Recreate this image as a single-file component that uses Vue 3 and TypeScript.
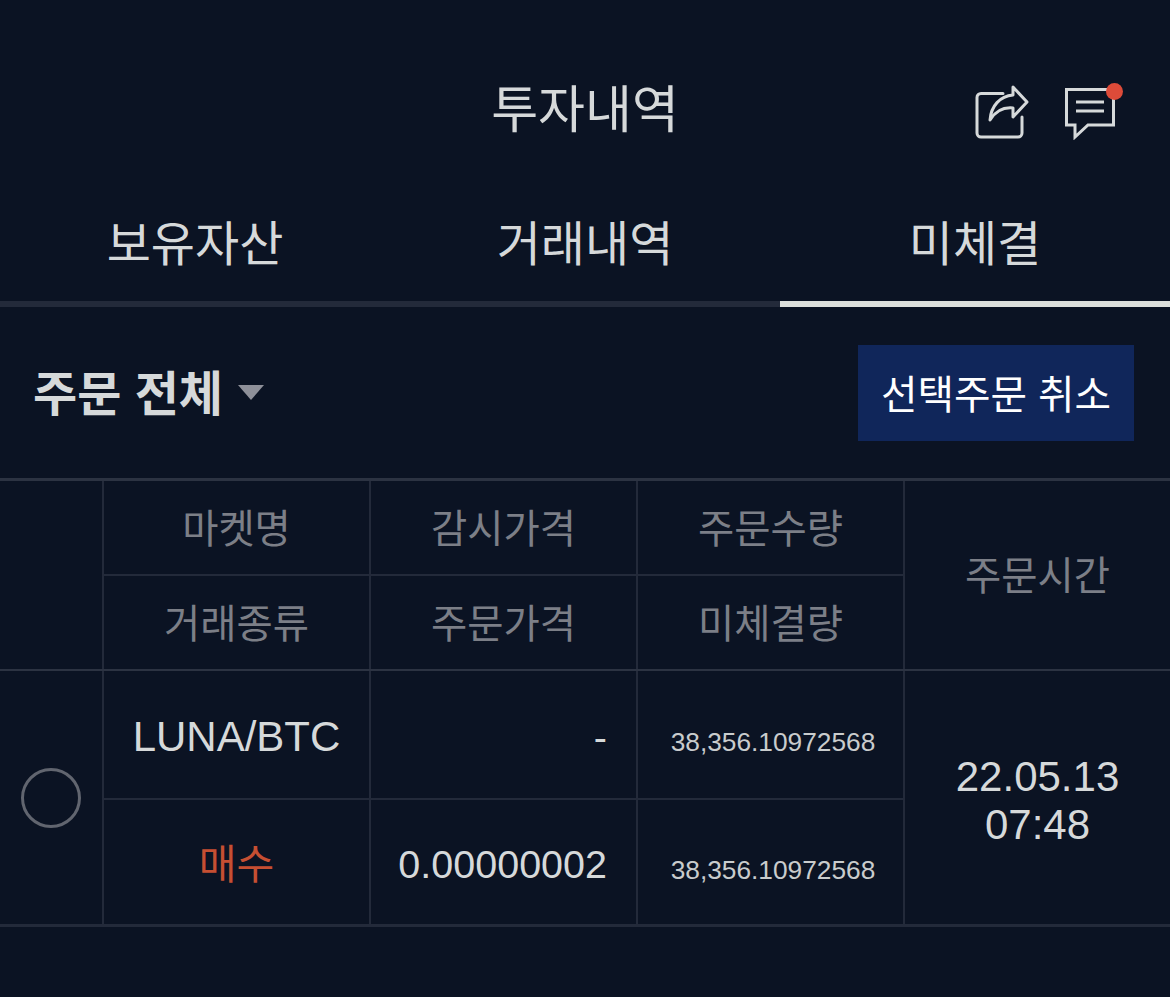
<template>
  <div class="page">
    <header class="top">
      <h1 class="title">투자내역</h1>
      <div class="top-icons">
        <svg width="60" height="56" viewBox="0 0 60 56" fill="none" stroke="#d6d9da" stroke-width="3" stroke-linejoin="round" stroke-linecap="round">
          <path d="M31 9.5H9a4 4 0 0 0-4 4V49a4 4 0 0 0 4 4h37a4 4 0 0 0 4-4V33" />
          <path d="M41 3l14 15-14 15v-9c-10-1-18 4-23 12 1-14 10-24 23-25z" />
        </svg>
        <span class="icon-chat">
          <svg width="53" height="56" viewBox="0 0 53 56" fill="none" stroke="#d6d9da" stroke-width="3" stroke-linejoin="miter">
            <path d="M2.5 5.5H49.5V41H24L11 53V41H2.5z" />
            <path d="M12 18h28M12 27h28" />
          </svg>
          <i class="dot"></i>
        </span>
      </div>
    </header>

    <nav class="tabs">
      <a v-for="(tab, i) in tabs" :key="tab" :class="['tab', { active: i === 2 }]">{{ tab }}</a>
    </nav>

    <section class="filter">
      <div class="select">
        <strong>주문 전체</strong>
        <i class="caret"></i>
      </div>
      <button class="cancel">선택주문 취소</button>
    </section>

    <div class="table">
      <div class="thead">
        <div class="check-col"></div>
        <div class="cell">마켓명</div>
        <div class="cell">감시가격</div>
        <div class="cell">주문수량</div>
        <div class="cell time">주문시간</div>
        <div class="cell">거래종류</div>
        <div class="cell">주문가격</div>
        <div class="cell">미체결량</div>
      </div>
      <div class="tbody">
        <div class="check-col"><span class="radio"></span></div>
        <div class="cell value market">{{ order.market }}</div>
        <div class="cell value right">-</div>
        <div class="cell small">{{ order.amount }}</div>
        <div class="cell value time lines">
          <span>{{ order.date }}</span>
          <span>{{ order.clock }}</span>
        </div>
        <div class="cell buy">{{ order.side }}</div>
        <div class="cell value right">{{ order.price }}</div>
        <div class="cell small">{{ order.remaining }}</div>
      </div>
    </div>
  </div>
</template>

<script setup lang="ts">
interface Order {
  market: string
  amount: string
  date: string
  clock: string
  side: string
  price: string
  remaining: string
}

const tabs: string[] = ['보유자산', '거래내역', '미체결']

const order: Order = {
  market: 'LUNA/BTC',
  amount: '38,356.10972568',
  date: '22.05.13',
  clock: '07:48',
  side: '매수',
  price: '0.00000002',
  remaining: '38,356.10972568',
}
</script>

<style>
html,
body {
  background: #0b1323;
}
</style>

<style scoped>
.page {
  width: 1170px;
  height: 997px;
  overflow: hidden;
  background: #0b1323;
  color: #d6d9da;
  font-family: "Liberation Sans", "Noto Sans CJK KR", sans-serif;
}

.top {
  position: relative;
  height: 190px;
  box-sizing: border-box;
  padding-top: 30px;
  display: flex;
  justify-content: center;
  align-items: center;
}

.title {
  margin: 0;
  font-size: 51px;
  font-weight: 400;
  line-height: 1;
}

.top-icons {
  position: absolute;
  top: 84px;
  right: 53px;
  display: flex;
  gap: 32px;
}

.icon-chat {
  position: relative;
  display: block;
  height: 56px;
}

.dot {
  position: absolute;
  top: -1px;
  right: -6px;
  width: 17px;
  height: 17px;
  border-radius: 50%;
  background: #dd4b39;
}

.tabs {
  display: grid;
  grid-template-columns: repeat(3, 1fr);
  height: 117px;
  box-sizing: border-box;
  border-bottom: 6px solid #232a3a;
}

.tab {
  position: relative;
  display: flex;
  justify-content: center;
  align-items: center;
  height: 111px;
  padding-bottom: 12px;
  box-sizing: border-box;
  font-size: 48px;
}

.tab.active::after {
  content: "";
  position: absolute;
  left: 0;
  right: 0;
  bottom: -6px;
  height: 6px;
  background: #dcdfdc;
}

.filter {
  display: flex;
  justify-content: space-between;
  align-items: center;
  height: 171px;
  box-sizing: border-box;
  padding: 0 36px 0 33px;
}

.select {
  display: flex;
  align-items: center;
  gap: 15px;
  padding-bottom: 6px;
}

.select strong {
  font-size: 48px;
  font-weight: 700;
}

.caret {
  width: 0;
  height: 0;
  margin-top: 6px;
  border-left: 13px solid transparent;
  border-right: 13px solid transparent;
  border-top: 15px solid #8e9099;
}

.cancel {
  width: 276px;
  height: 96px;
  border: 0;
  padding: 0 0 2px;
  background: #10265a;
  color: #fff;
  font: inherit;
  font-size: 39.7px;
}

.table {
  border-top: 3px solid #2c3342;
}

.thead,
.tbody {
  display: grid;
  grid-template-columns: 104px 267px 267px 267px 1fr;
}

.thead {
  grid-template-rows: 95px 93px;
  border-bottom: 2px solid #2c3342;
}

.thead .cell {
  padding-bottom: 5px;
  font-size: 39.4px;
}

.tbody {
  grid-template-rows: 129px 124px;
  border-bottom: 3px solid #232a3a;
}

.check-col {
  grid-row: 1 / 3;
  display: flex;
  align-items: center;
  justify-content: center;
  box-sizing: border-box;
  padding-top: 1px;
  border-right: 2px solid #232a3a;
}

.radio {
  width: 60px;
  height: 60px;
  box-sizing: border-box;
  border: 3px solid #61656f;
  border-radius: 50%;
}

.cell {
  display: flex;
  align-items: center;
  justify-content: center;
  box-sizing: border-box;
  border-right: 2px solid #232a3a;
  border-bottom: 2px solid #232a3a;
  font-size: 41px;
  color: #7c7f87;
}

.time {
  grid-column: 5;
  grid-row: 1 / 3;
  border-right: 0;
  border-bottom: 0;
}

.cell:nth-child(n + 6) {
  border-bottom: 0;
}

.value {
  color: #d6d9da;
  font-size: 39.5px;
}

.market {
  padding-top: 4px;
  font-size: 42px;
}

.right {
  justify-content: flex-end;
  padding-top: 5px;
  padding-right: 29px;
}

.small {
  padding-top: 16px;
  padding-left: 5px;
  font-size: 26.3px;
  color: #c9cccd;
}

.lines {
  flex-direction: column;
  padding-top: 6px;
  font-size: 42px;
  line-height: 48px;
}

.buy {
  padding-bottom: 3px;
  color: #c64f32;
}
</style>
